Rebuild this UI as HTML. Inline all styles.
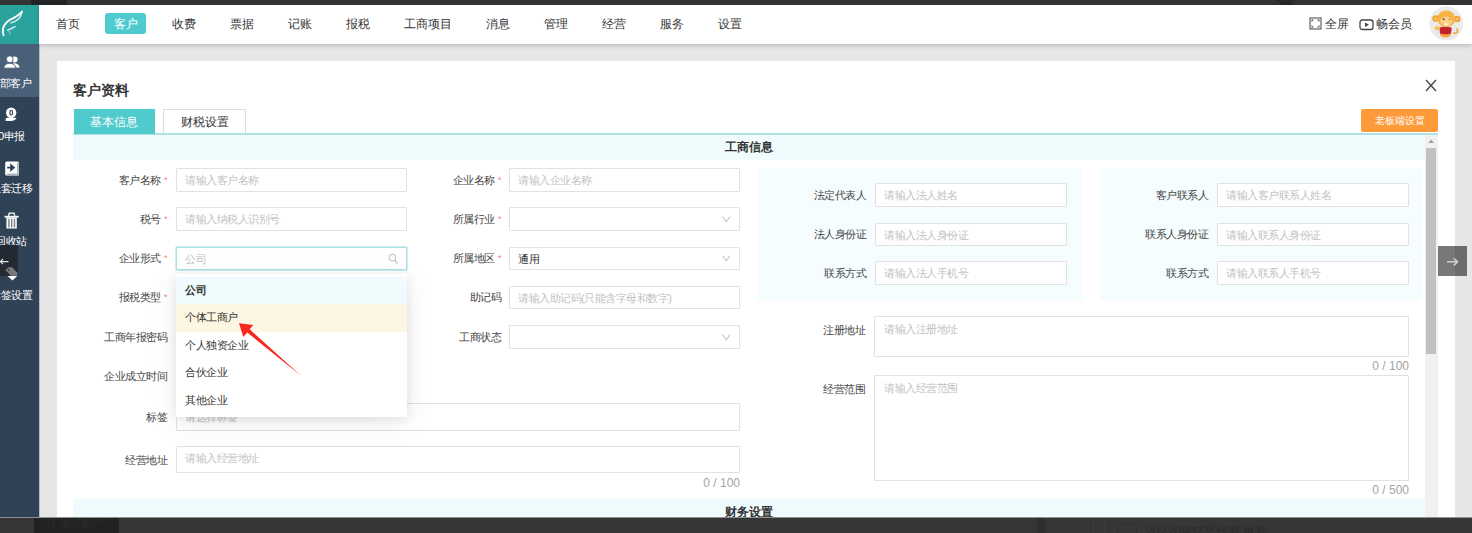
<!DOCTYPE html>
<html><head><meta charset="utf-8">
<style>
*{box-sizing:border-box;margin:0;padding:0}
html,body{width:1472px;height:533px;overflow:hidden;background:#e6e6e6;font-family:"Liberation Sans",sans-serif;color:#333}
.abs{position:absolute}
#topstrip{left:0;top:0;width:1472px;height:5px;background:#333}
#sidebar{left:0;top:5px;width:39px;height:512px;background:#2f4256;box-shadow:0.5px 0 0 rgba(47,66,86,.5)}
#logo{left:0;top:0;width:39px;height:39px;background:#2aa39f}
#sbact{left:0;top:39px;width:39px;height:53px;background:#4a6079}
.sbt{position:absolute;color:#fff;font-size:11px;letter-spacing:-0.5px;white-space:nowrap;line-height:12px}
#header{left:39px;top:5px;width:1433px;height:39px;background:#fff;box-shadow:0 2px 4px rgba(0,0,0,.17)}
.nav{position:absolute;top:11px;font-size:12px;line-height:16px;color:#333;white-space:nowrap}
#navact{left:66px;top:8px;width:41px;height:21px;background:#4fcbd0;border-radius:3px}
#modal{left:57px;top:61px;width:1398px;height:480px;background:#fff}
.t{position:absolute;white-space:nowrap;line-height:14px}
.lbl{position:absolute;font-size:11px;letter-spacing:-0.5px;color:#444;white-space:nowrap;line-height:14px;text-align:right}
.req{color:#f7838a;margin-left:3px;font-size:9px;position:relative;top:-1px}
.inp{position:absolute;border:1px solid #e2e2e2;background:#fff;border-radius:1px}
.ph{position:absolute;left:8px;letter-spacing:-0.5px;font-size:11px;color:#c2c2c2;white-space:nowrap;line-height:14px}
.caret{position:absolute;right:10px;top:7px;width:7px;height:7px;border-right:1px solid #c0c4cc;border-bottom:1px solid #c0c4cc;transform:rotate(45deg)}
.band{position:absolute;background:#effbfd}
.box{position:absolute;background:#f5fdfe}
.dd{position:absolute;left:176px;top:274px;width:231px;height:143px;background:#fff;box-shadow:0 2px 10px rgba(0,0,0,.09),0 6px 30px rgba(0,0,0,.07);padding-top:3px}
.ddi{height:27.4px;line-height:27.4px;padding-left:9px;font-size:11px;letter-spacing:-0.5px;color:#333;white-space:nowrap}
.cnt{position:absolute;font-size:12px;color:#a3a3a3;line-height:14px;white-space:nowrap}
#content{position:absolute;left:0;top:0;width:1472px;height:533px}
</style></head><body>
<div id="topstrip" class="abs"><div class="abs" style="left:31px;top:0;width:36px;height:5px;background:#212325"></div><div class="abs" style="left:1275px;top:0;width:20px;height:2px;background:#2a2a2a;border-radius:0 0 8px 8px"></div><div class="abs" style="left:1280px;top:2px;width:12px;height:3px;background:#2a2328"></div></div>

<div id="sidebar" class="abs">
  <div id="logo" class="abs">
    <svg width="39" height="39" viewBox="0 5 39 39" style="position:absolute;left:0;top:0">
      <path d="M3.6 35.2 C1.2 28.5 4.5 22.3 11.8 18.8 C16.3 16.7 19.8 14.6 21.9 11.6" stroke="#fff" stroke-width="1.9" fill="none" stroke-linecap="round" opacity=".95"/>
      <path d="M21.9 12 C21.6 17 17.5 21.5 10.8 22.9" stroke="#fff" stroke-width="1.3" fill="none" stroke-linecap="round" opacity=".85"/>
      <path d="M7.6 30.2 C10 29.3 12.8 28 15 26.6" stroke="#fff" stroke-width="1.4" fill="none" stroke-linecap="round" opacity=".8"/>
      <path d="M8.2 31.5 C10.5 31.8 11 33 8.8 34.3" stroke="#fff" stroke-width="0.9" fill="none" opacity=".5"/>
    </svg>
  </div>
  <div id="sbact" class="abs"></div>
  <svg class="abs" style="left:0;top:0" width="39" height="512" viewBox="0 5 39 512">
    <!-- users -->
    <circle cx="14.6" cy="59.5" r="3" fill="#fff"/>
    <path d="M11 67.8 C11.5 64.5 13 63.5 14.8 63.3 C17.5 63.5 19.2 65 19.6 67.6 Z" fill="#fff"/>
    <circle cx="9.8" cy="59.2" r="3.4" fill="#fff" stroke="#4a5f78" stroke-width="0.9"/>
    <path d="M3.8 68.2 C4 65 6.5 63.3 9.8 63.3 C13.2 63.3 15.6 65 15.9 68.2 Z" fill="#fff" stroke="#4a5f78" stroke-width="0.9"/>
    <!-- coin hand -->
    <circle cx="11.2" cy="112.8" r="5.2" fill="#fff"/>
    <ellipse cx="11.2" cy="112.6" rx="1.3" ry="2.4" fill="none" stroke="#2f4156" stroke-width="1.1"/>
    <path d="M5.6 118.5 C7.5 117.5 9.5 117.2 12 117.8 L16.6 118 C15.5 120 13.5 121 11 121 L5.6 121 Z" fill="#fff"/>
    <!-- transfer -->
    <rect x="5.2" y="161.5" width="13.8" height="14" rx="1.5" fill="#fff"/>
    <rect x="7" y="173.5" width="11.5" height="2" fill="#aab4bf"/>
    <rect x="17" y="163" width="1.8" height="11" fill="#aab4bf"/>
    <path d="M7.2 167.6 H13 M11 165 L14 167.6 L11 170.2 Z" stroke="#2f4156" stroke-width="1.6" fill="#2f4156"/>
    <!-- trash -->
    <rect x="4.6" y="215.8" width="14" height="1.8" fill="#fff"/>
    <path d="M8.5 215.8 L9.3 213.2 H14 L14.8 215.8" fill="none" stroke="#fff" stroke-width="1.3"/>
    <path d="M6.4 217.5 H16.8 V228.5 H6.4 Z" fill="#fff"/>
    <rect x="8.2" y="218.8" width="1.4" height="8.6" fill="#75808c"/>
    <rect x="11" y="218.8" width="1.4" height="8.6" fill="#75808c"/>
    <rect x="13.8" y="218.8" width="1.4" height="8.6" fill="#75808c"/>
    <!-- tag (bottom white) -->
    <path d="M7.3 275.7 H17.5 L12.4 280.4 Z" fill="#fff"/>
  </svg>
  <div class="sbt" style="left:-11px;top:71.6px">全部客户</div>
  <div class="sbt" style="left:-2px;top:125px">0申报</div>
  <div class="sbt" style="left:-10px;top:177px">账套迁移</div>
  <div class="sbt" style="left:-5px;top:230px">回收站</div>
  <div class="sbt" style="left:-10px;top:283.5px">标签设置</div>
  <div class="abs" style="left:0;top:240px;width:18px;height:31px;background:#232a33">
    <svg class="abs" style="left:0;top:0" width="18" height="31" viewBox="0 245 18 31">
      <path d="M0 261.6 H8.5 M0.5 261.6 L3 259 M0.5 261.6 L3 264.2" stroke="#e8e8e8" stroke-width="1.2" fill="none"/>
      <path d="M5.6 270 L8.5 267.2 L12 267.2 L17.5 272.8 L17.5 275.7 L11 275.7 L5.6 270.3 Z" fill="#7a7a7a"/>
      <circle cx="8.6" cy="270" r="1" fill="#3a3a3a"/>
    </svg>
  </div>
</div>

<div id="header" class="abs">
  <div id="navact" class="abs"></div>
  <div class="nav" style="left:17px">首页</div>
  <div class="nav" style="left:75px;color:#fff">客户</div>
  <div class="nav" style="left:133px">收费</div>
  <div class="nav" style="left:191px">票据</div>
  <div class="nav" style="left:249px">记账</div>
  <div class="nav" style="left:307px">报税</div>
  <div class="nav" style="left:365px">工商项目</div>
  <div class="nav" style="left:447px">消息</div>
  <div class="nav" style="left:505px">管理</div>
  <div class="nav" style="left:563px">经营</div>
  <div class="nav" style="left:621px">服务</div>
  <div class="nav" style="left:679px">设置</div>
  <svg class="abs" style="left:1270px;top:12px" width="14" height="14" viewBox="0 0 14 14">
    <rect x="1" y="1" width="11" height="11" fill="none" stroke="#555" stroke-width="1.1"/>
    <path d="M2.5 2.5 L5 2.5 L2.5 5 Z M10.5 2.5 L8 2.5 L10.5 5 Z M2.5 10.5 L5 10.5 L2.5 8 Z M10.5 10.5 L8 10.5 L10.5 8 Z" fill="#555"/>
  </svg>
  <div class="nav" style="left:1286px;top:11px">全屏</div>
  <svg class="abs" style="left:1320px;top:14px" width="16" height="12" viewBox="0 0 16 12">
    <rect x="1" y="1" width="13" height="9.5" rx="2.2" fill="none" stroke="#444" stroke-width="1.3"/>
    <path d="M6 3.4 L10 5.75 L6 8.1 Z" fill="#444"/>
  </svg>
  <div class="nav" style="left:1337px;top:11px">畅会员</div>
  <svg class="abs" style="left:1390px;top:1px" width="36" height="36" viewBox="0 0 36 36">
    <circle cx="17.2" cy="17.5" r="17" fill="#ebebeb"/>
    <path d="M24 27 C28 28 30 25 27.5 22.5" stroke="#f4a53c" stroke-width="1.6" fill="none"/>
    <ellipse cx="16.5" cy="28.5" rx="5.5" ry="3" fill="#f4a43a"/>
    <path d="M10.5 21.5 C13 20.3 20 20.3 22.8 21.8 L22 27.5 C19 28.5 14 28.5 11 27.5 Z" fill="#c5202b"/>
    <circle cx="8" cy="22.3" r="2.2" fill="#f9c54a"/>
    <circle cx="6.6" cy="12.6" r="3.3" fill="#f2a23a"/>
    <circle cx="28.2" cy="13" r="3.3" fill="#f2a23a"/>
    <circle cx="6.6" cy="12.6" r="1.6" fill="#f7c36a"/>
    <circle cx="28.2" cy="13" r="1.6" fill="#f7c36a"/>
    <ellipse cx="17.3" cy="12.8" rx="9" ry="8.4" fill="#f6b444"/>
    <ellipse cx="17.3" cy="15.3" rx="6" ry="4.8" fill="#fbcf85"/>
    <circle cx="14.6" cy="13.3" r="1" fill="#6b4a66"/>
    <path d="M19.6 13.6 Q20.6 12.9 21.6 13.6" stroke="#8a5a3a" stroke-width="0.8" fill="none"/>
    <ellipse cx="17" cy="18.3" rx="1.6" ry="1.1" fill="#fff"/>
  </svg>
</div>

<div id="modal" class="abs"></div>
<div id="content">

<div class="t" style="left:73px;top:82px;font-size:14px;font-weight:bold;color:#333;line-height:16px">客户资料</div>
<svg class="abs" style="left:1424px;top:78px" width="14" height="15" viewBox="0 0 14 15"><path d="M2 2 L12 13 M12 2 L2 13" stroke="#444" stroke-width="1.3" fill="none"/></svg>
<div class="abs" style="left:73.5px;top:109.3px;width:81.5px;height:24.7px;background:#4fcacd;color:#fff;font-size:12px;line-height:26px;text-align:center;z-index:2">基本信息</div>
<div class="abs" style="left:163px;top:108.5px;width:83px;height:25px;border:1px solid #dcdcdc;border-bottom:none;background:#fff;color:#333;font-size:12px;line-height:25px;text-align:center">财税设置</div>
<div class="abs" style="left:73px;top:133px;width:1365px;height:2px;background:#ade3e6"></div>
<div class="band" style="left:73px;top:135px;width:1352px;height:25px"></div>
<div class="t" style="left:725px;top:140px;font-size:12px;font-weight:bold;color:#333">工商信息</div>
<div class="abs" style="left:1361px;top:109px;width:77px;height:23px;background:#ff9a3a;border-radius:2px;color:#fff;font-size:10px;line-height:23px;text-align:center">老板端设置</div>
<div class="band" style="left:73px;top:499px;width:1352px;height:30px"></div>
<div class="t" style="left:725px;top:505px;font-size:12px;font-weight:bold;color:#333">财务设置</div>
<div class="abs" style="left:1425px;top:135px;width:13px;height:390px;background:#f1f1f1"></div>
<div class="abs" style="left:1426px;top:147.5px;width:10px;height:206px;background:#c1c1c1"></div>
<svg class="abs" style="left:1426px;top:137px" width="10" height="8"><path d="M2.2 6 L5.2 2.6 L8.2 6 Z" fill="#a3a3a3"/></svg>
<div class="abs" style="left:1438px;top:246px;width:29px;height:30px;background:rgba(0,0,0,.53)"><svg width="29" height="30" viewBox="1438 246 29 30"><path d="M1447 261.8 H1457.5 M1453.8 258.2 L1457.6 261.8 L1453.8 265.4" stroke="#d0d0d0" stroke-width="1.5" fill="none"/></svg></div>
<div class="lbl" style="right:1305px;top:173px">客户名称<span class="req">*</span></div>
<div class="inp" style="left:176px;top:168px;width:231px;height:24px;"><div class="ph" style="top:4.0px">请输入客户名称</div></div>
<div class="lbl" style="right:1305px;top:212px">税号<span class="req">*</span></div>
<div class="inp" style="left:176px;top:207px;width:231px;height:24px;"><div class="ph" style="top:4.0px">请输入纳税人识别号</div></div>
<div class="lbl" style="right:1305px;top:251px">企业形式<span class="req">*</span></div>
<div class="inp" style="left:176px;top:247px;width:231px;height:23px;border-color:#aae2e5;box-shadow:0 0 0 1px #cdeff1"><div class="ph" style="top:3.5px">公司</div><svg class="abs" style="left:206px;top:4px" width="16" height="14" viewBox="382 251 16 14"><circle cx="391.4" cy="256.6" r="3.4" fill="none" stroke="#bdbdbd" stroke-width="1"/><path d="M393.8 259.2 L396.5 262.6" stroke="#bdbdbd" stroke-width="1.1"/></svg></div>
<div class="lbl" style="right:1305px;top:290px">报税类型<span class="req">*</span></div>
<div class="inp" style="left:176px;top:286px;width:231px;height:23px;"></div>
<div class="lbl" style="right:1305px;top:330px">工商年报密码</div>
<div class="inp" style="left:176px;top:325px;width:231px;height:24px;"></div>
<div class="lbl" style="right:1305px;top:369px">企业成立时间</div>
<div class="inp" style="left:176px;top:364px;width:231px;height:24px;"></div>
<div class="lbl" style="right:1305px;top:410px">标签</div>
<div class="inp" style="left:176px;top:403px;width:564px;height:28px;"><div class="ph" style="top:5.5px">请选择标签</div></div>
<div class="lbl" style="right:1305px;top:453px">经营地址</div>
<div class="inp" style="left:176px;top:446px;width:564px;height:27px;"><div class="ph" style="top:3.5px">请输入经营地址</div></div>
<div class="cnt" style="right:732px;top:476px">0 / 100</div>
<div class="lbl" style="right:971px;top:173px">企业名称<span class="req">*</span></div>
<div class="inp" style="left:509px;top:168px;width:231px;height:24px;"><div class="ph" style="top:4.0px">请输入企业名称</div></div>
<div class="lbl" style="right:971px;top:212px">所属行业<span class="req">*</span></div>
<div class="inp" style="left:509px;top:207px;width:231px;height:24px;"><svg class="abs" style="left:212px;top:7.7px" width="9" height="7" viewBox="0 0 9 7"><path d="M0.6 0.6 L4.3 5.8 L8 0.6" stroke="#c6c6c6" stroke-width="1.1" fill="none"/></svg></div>
<div class="lbl" style="right:971px;top:251px">所属地区<span class="req">*</span></div>
<div class="inp" style="left:509px;top:247px;width:231px;height:23px;"><div class="ph" style="top:3.5px;color:#333">通用</div><svg class="abs" style="left:212px;top:7.2px" width="9" height="7" viewBox="0 0 9 7"><path d="M0.6 0.6 L4.3 5.8 L8 0.6" stroke="#c6c6c6" stroke-width="1.1" fill="none"/></svg></div>
<div class="lbl" style="right:971px;top:290px">助记码</div>
<div class="inp" style="left:509px;top:286px;width:231px;height:23px;"><div class="ph" style="top:3.5px">请输入助记码(只能含字母和数字)</div></div>
<div class="lbl" style="right:971px;top:330px">工商状态</div>
<div class="inp" style="left:509px;top:325px;width:231px;height:24px;"><svg class="abs" style="left:212px;top:7.7px" width="9" height="7" viewBox="0 0 9 7"><path d="M0.6 0.6 L4.3 5.8 L8 0.6" stroke="#c6c6c6" stroke-width="1.1" fill="none"/></svg></div>
<div class="box" style="left:757px;top:168px;width:326px;height:133px"></div>
<div class="box" style="left:1100px;top:168px;width:321px;height:133px"></div>
<div class="lbl" style="right:606px;top:188px">法定代表人</div>
<div class="inp" style="left:875px;top:183px;width:192px;height:24px;"><div class="ph" style="top:4.0px">请输入法人姓名</div></div>
<div class="lbl" style="right:264px;top:188px">客户联系人</div>
<div class="inp" style="left:1217px;top:183px;width:192px;height:24px;"><div class="ph" style="top:4.0px">请输入客户联系人姓名</div></div>
<div class="lbl" style="right:606px;top:227px">法人身份证</div>
<div class="inp" style="left:875px;top:223px;width:192px;height:23px;"><div class="ph" style="top:3.5px">请输入法人身份证</div></div>
<div class="lbl" style="right:264px;top:227px">联系人身份证</div>
<div class="inp" style="left:1217px;top:223px;width:192px;height:23px;"><div class="ph" style="top:3.5px">请输入联系人身份证</div></div>
<div class="lbl" style="right:606px;top:266px">联系方式</div>
<div class="inp" style="left:875px;top:261px;width:192px;height:24px;"><div class="ph" style="top:4.0px">请输入法人手机号</div></div>
<div class="lbl" style="right:264px;top:266px">联系方式</div>
<div class="inp" style="left:1217px;top:261px;width:192px;height:24px;"><div class="ph" style="top:4.0px">请输入联系人手机号</div></div>
<div class="lbl" style="right:607px;top:323px">注册地址</div>
<div class="inp" style="left:874px;top:316px;width:535px;height:41px;"></div>
<div class="ph" style="left:884px;top:322px">请输入注册地址</div>
<div class="cnt" style="right:63px;top:359px">0 / 100</div>
<div class="lbl" style="right:607px;top:382px">经营范围</div>
<div class="inp" style="left:874px;top:375px;width:535px;height:106px;"></div>
<div class="ph" style="left:884px;top:381px">请输入经营范围</div>
<div class="cnt" style="right:63px;top:483px">0 / 500</div>

<div class="dd">
  <div class="ddi" style="background:#effbfc;font-weight:bold">公司</div>
  <div class="ddi" style="background:#fdf6e2">个体工商户</div>
  <div class="ddi">个人独资企业</div>
  <div class="ddi">合伙企业</div>
  <div class="ddi">其他企业</div>
</div>
<svg class="abs" style="left:230px;top:315px" width="80" height="70" viewBox="230 315 80 70">
  <path d="M301 375.8 L247.3 332.6 L243.3 337 L239 323.3 L253.3 325 L249.6 329.3 Z" fill="#f8271e"/>
</svg>
</div>

<div class="abs" style="left:0;top:517px;width:1472px;height:1px;background:#8e9293"></div>
<div class="abs" style="left:0;top:518px;width:1472px;height:15px;background:#363636;overflow:hidden">
  <div class="abs" style="left:34px;top:0;width:85px;height:15px;background:#222"></div>
  <svg class="abs" style="left:46px;top:0" width="10" height="9" viewBox="0 0 10 9"><path d="M1 4.5 L5 1 L9 4.5 M2.3 3.6 V8.5 H7.7 V3.6" stroke="#2e2e2e" stroke-width="1" fill="none"/></svg>
  <div class="abs" style="left:61px;top:1px;font-size:10px;line-height:10px;color:#2c2c2c;white-space:nowrap">测试客户</div>
  <div class="abs" style="left:320px;top:9px;font-size:10px;line-height:10px;color:#393939;white-space:nowrap">新增</div>
  <div class="abs" style="left:402px;top:9px;font-size:10px;line-height:10px;color:#393939;white-space:nowrap">编辑</div>
  <div class="abs" style="left:1037px;top:0;width:8px;height:16px;background:#2e2e2e"></div>
  <div class="abs" style="left:1090px;top:0;width:1px;height:16px;background:#303030"></div><div class="abs" style="left:1104px;top:0;width:1px;height:16px;background:#3a3a3a"></div>
  <div class="abs" style="left:1117px;top:5.5px;width:20px;height:12px;border:1px solid #2f2f2f;border-radius:2px"></div>
  <div class="abs" style="left:1145px;top:7px;font-size:13px;line-height:14px;color:#2b2b2b;white-space:nowrap">20220907早代账更新</div>
</div>
</body></html>
